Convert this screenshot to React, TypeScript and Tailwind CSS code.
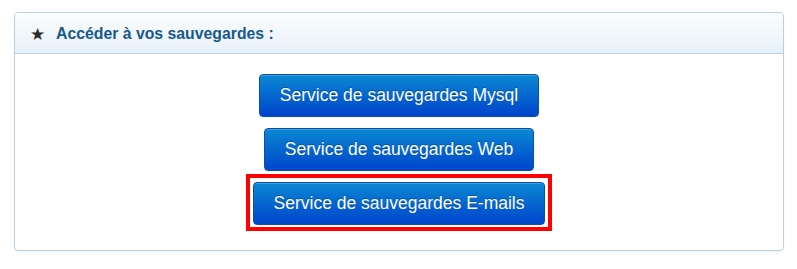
import React from "react";

const Btn = ({ label }: { label: string }) => (
  <button
    className="h-[43px] px-5 rounded-[4px] border border-[#0a4fa8] bg-[linear-gradient(to_bottom,#0a88d2,#0044cc)] text-white text-[17.5px] leading-none whitespace-nowrap [text-shadow:0_-1px_0_rgba(0,0,0,0.25)] shadow-[inset_0_1px_0_rgba(255,255,255,0.2),0_1px_2px_rgba(0,0,0,0.05)]"
    style={{ fontFamily: '"Liberation Sans", Arial, sans-serif' }}
  >
    {label}
  </button>
);

export default function App() {
  return (
    <div className="w-[797px] h-[269px] bg-white pt-3 pl-[14px]" style={{ fontFamily: '"Liberation Sans", Arial, sans-serif' }}>
      <div className="w-[770px] h-[239px] border border-[#b7d0e2] rounded-[4px] shadow-[0_1px_2px_rgba(0,0,0,0.06)] flex flex-col overflow-hidden">
        <div className="h-[41px] shrink-0 border-b border-[#b7d0e2] bg-[linear-gradient(to_bottom,#fbfdfe,#e7f1f8)] flex items-center pl-[15px] pt-[2px]">
          <span className="text-[#2b2b2b] text-[17px] leading-none">★</span>
          <span className="ml-[11px] text-[#17598b] text-[15.8px] font-bold leading-none">Accéder à vos sauvegardes :</span>
        </div>
        <div className="flex flex-col items-center pt-5">
          <Btn label="Service de sauvegardes Mysql" />
          <div className="mt-[11px]">
            <Btn label="Service de sauvegardes Web" />
          </div>
          <div className="mt-[3px] border-[4px] border-[#ff0000] pt-1 pb-[2px] px-[3px]">
            <Btn label="Service de sauvegardes E-mails" />
          </div>
        </div>
      </div>
    </div>
  );
}
